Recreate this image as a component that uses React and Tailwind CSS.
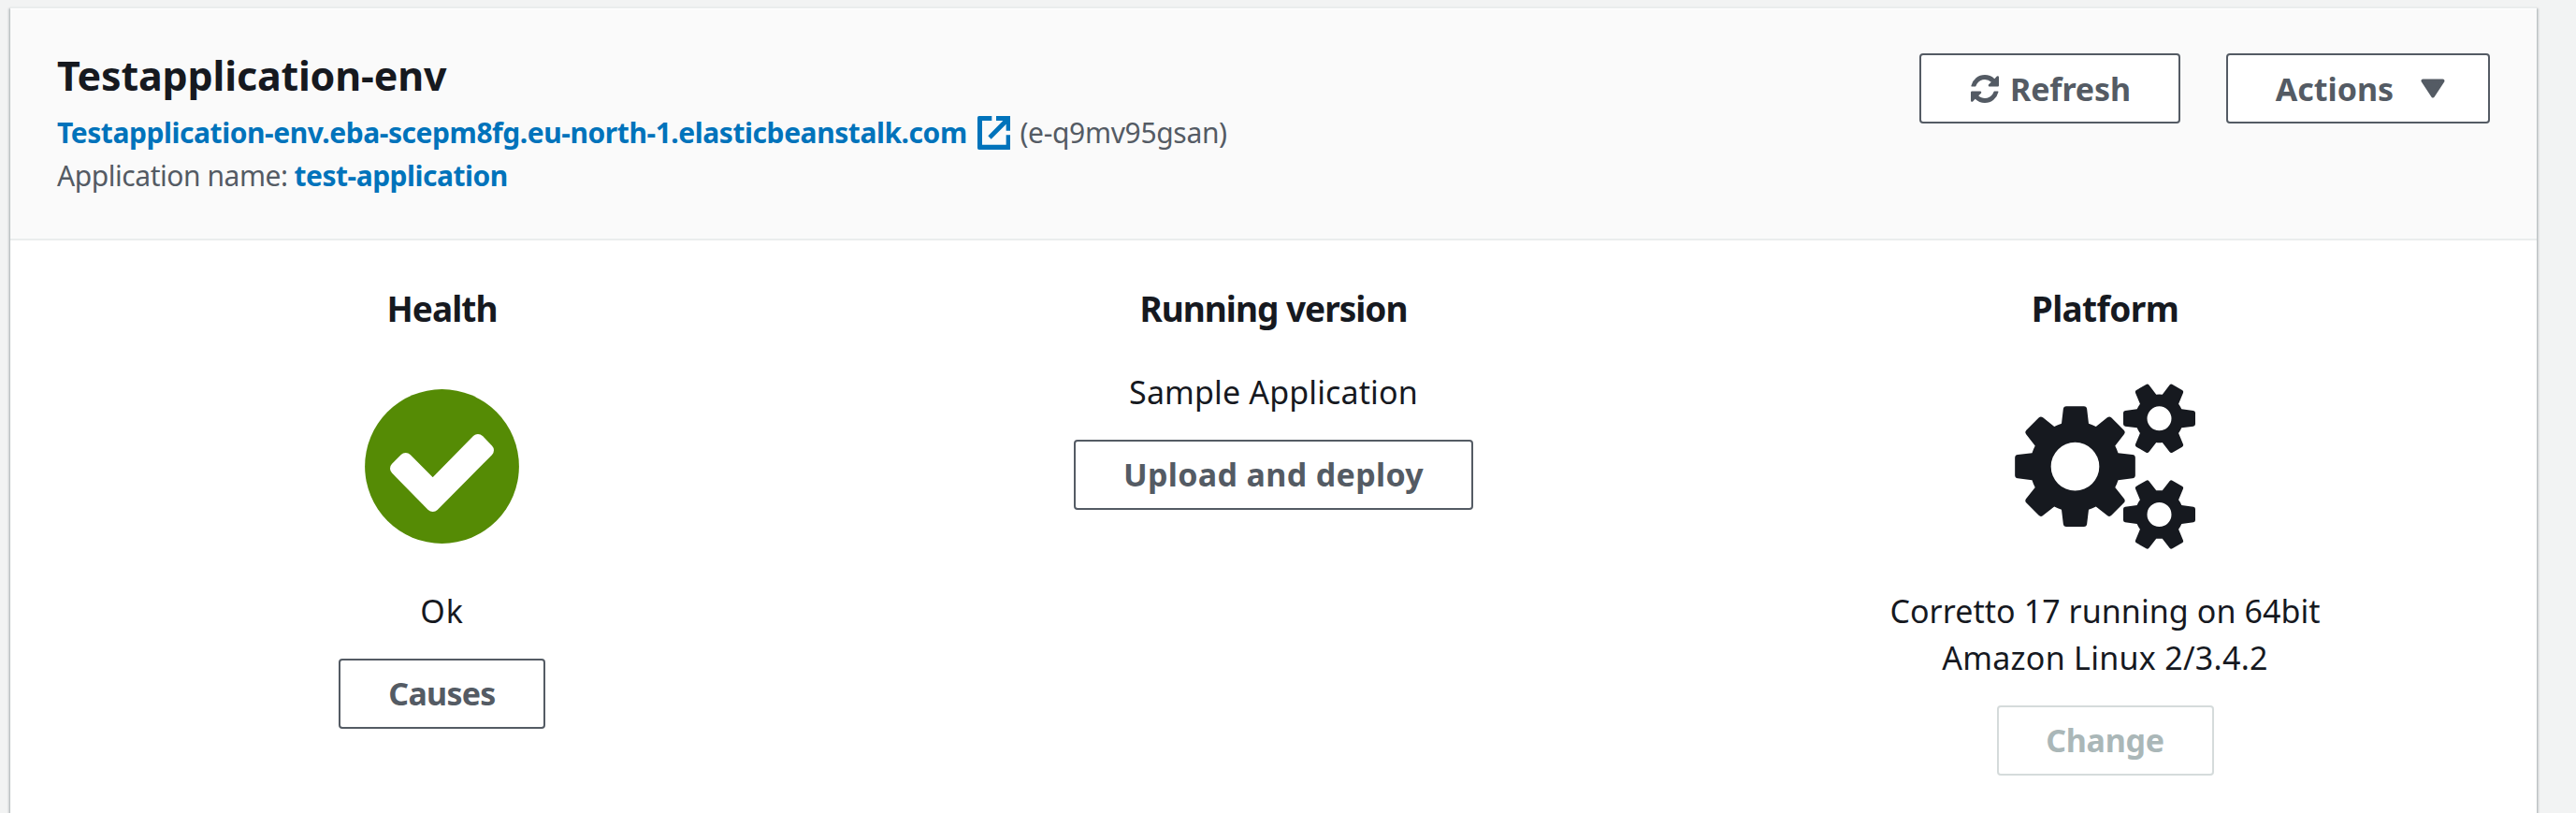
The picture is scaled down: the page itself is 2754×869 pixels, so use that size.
import React from "react";

const round = (n) => n.toFixed(2);

// Outline of a gear centred on (cx, cy). `tip` and `base` are [distance, half width] of a tooth.
function gearPath(cx, cy, teeth, tip, base, root, hole, corner) {
  const step = (Math.PI * 2) / teeth;
  const at = (angle, d, w) =>
    `${round(cx + d * Math.cos(angle) - w * Math.sin(angle))} ${round(cy + d * Math.sin(angle) + w * Math.cos(angle))}`;
  let path = "";
  for (let i = 0; i < teeth; i++) {
    const a = i * step;
    path += i === 0 ? `M${at(a, base[0], -base[1])}` : `A${root} ${root} 0 0 1 ${at(a, base[0], -base[1])}`;
    path += `L${at(a, tip[0] - corner, -tip[1] - 1)}Q${at(a, tip[0], -tip[1])} ${at(a, tip[0], -tip[1] + corner)}`;
    path += `L${at(a, tip[0], tip[1] - corner)}Q${at(a, tip[0], tip[1])} ${at(a, tip[0] - corner, tip[1] + 1)}`;
    path += `L${at(a, base[0], base[1])}`;
  }
  path += `A${root} ${root} 0 0 1 ${at(0, base[0], -base[1])}Z`;
  path += `M${cx - hole} ${cy}a${hole} ${hole} 0 1 0 ${hole * 2} 0a${hole} ${hole} 0 1 0 ${-hole * 2} 0Z`;
  return path;
}

const bigGear = gearPath(655.5, 626, 8, [193, 37], [138, 43.5], 145, 77.5, 9);
const topGear = gearPath(925.5, 472, 6, [115.5, 24], [71.5, 30], 77, 39, 6);
const bottomGear = gearPath(925.5, 780, 6, [115.5, 24], [71.5, 30], 77, 39, 6);

function GearsIcon() {
  return (
    <svg viewBox="462 360 579 532" className="h-[177.33px] w-[193px] text-[#16191f]" fill="currentColor" fillRule="evenodd">
      <path d={bigGear} />
      <path d={topGear} />
      <path d={bottomGear} />
    </svg>
  );
}

function HealthyIcon() {
  return (
    <svg viewBox="0 0 165 165" className="h-[165px] w-[165px]">
      <circle cx="82.5" cy="82.5" r="82.4" fill="#558b05" />
      <path
        d="M34 84.7 43.7 75 72.7 104.1 121 55 131 65.3 72.7 124Z"
        fill="#fff"
        stroke="#fff"
        strokeWidth="14"
        strokeLinejoin="round"
      />
    </svg>
  );
}

function RefreshIcon() {
  return (
    <svg viewBox="0 0 1536 1536" className="h-[30px] w-[30px]" fill="currentColor">
      <path d="M1511 928q0 5-1 7-64 268-268 434.5t-478 166.5q-146 0-282.5-55t-243.5-157l-129 129q-19 19-45 19t-45-19-19-45v-448q0-26 19-45t45-19h448q26 0 45 19t19 45-19 45l-137 137q71 66 161 102t187 36q134 0 250-65t186-179q11-17 53-117 8-23 30-23h192q13 0 22.500 9.500t9.500 22.500zm25-800v448q0 26-19 45t-45 19h-448q-26 0-45-19t-19-45 19-45l138-138q-148-137-349-137-134 0-250 65t-186 179q-11 17-53 117-8 23-30 23h-199q-13 0-22.500-9.500t-9.500-22.500v-7q65-268 270-434.500t480-166.500q146 0 284 55.500t245 156.500l130-129q19-19 45-19t45 19 19 45z" />
    </svg>
  );
}

function ExternalIcon() {
  return (
    <svg viewBox="0 0 107 108" className="h-[36px] w-[35.67px]" fill="currentColor">
      <path d="M46 0H5Q0 0 0 5V103Q0 108 5 108H101Q107 108 107 103V61H92V92H15V15H46Z" />
      <path d="M60 0H107V47H92V26L44 74 34 64 82 15H60Z" />
    </svg>
  );
}

function CaretIcon() {
  return (
    <svg viewBox="0 0 26 21" className="h-[21px] w-[26px]" fill="currentColor" stroke="currentColor" strokeWidth="4" strokeLinejoin="round">
      <path d="M2.500 2.500H23.500L13 18.500Z" />
    </svg>
  );
}

function Button({ className, children }) {
  return (
    <button
      type="button"
      className={
        "flex h-[75px] items-center justify-center rounded-[4px] border-2 bg-white text-[34px] leading-[50px] font-bold " +
        className
      }
    >
      {children}
    </button>
  );
}

function Column({ title, spacing, children }) {
  return (
    <section className="flex flex-col items-center text-[34px] leading-[50px]">
      <h2 className={"text-[37px] font-bold " + spacing}>{title}</h2>
      {children}
    </section>
  );
}

export default function App() {
  return (
    <main className="h-[869px] overflow-hidden bg-[#f2f3f3] pt-[7px] pr-[42px] pl-[11px] font-['Noto_Sans',sans-serif] text-[#16191f]">
      <div className="h-[900px] border-t-2 border-[#eaeded] bg-white pt-px shadow-[0_2px_2px_0_rgba(0,28,36,0.3),2px_2px_2px_0_rgba(0,28,36,0.15),-2px_2px_2px_0_rgba(0,28,36,0.15)]">
        <header className="flex h-[247px] items-start justify-between border-b-2 border-[#eaeded] bg-[#fafafa] pr-[50px] pl-[50px]">
          <div className="pt-[46px] text-[30px] leading-[46px] text-[#545b64]">
            <h1 className="text-[43px] leading-[50px] font-bold tracking-[-0.18px] text-[#16191f]">Testapplication-env</h1>
            <div className="mt-[13px] flex items-center">
              <a className="font-bold tracking-[-0.44px] text-[#0073bb]">
                Testapplication-env.eba-scepm8fg.eu-north-1.elasticbeanstalk.com
              </a>
              <span className="ml-[11px] text-[#0073bb]">
                <ExternalIcon />
              </span>
              <span className="ml-[10px] tracking-[-0.33px]">(e-q9mv95gsan)</span>
            </div>
            <div className="flex">
              <span className="tracking-[-0.45px]">Application name:</span>
              <a className="ml-[7px] font-bold tracking-[-0.5px] text-[#0073bb]">test-application</a>
            </div>
          </div>
          <div className="flex gap-[49px] pt-[47px]">
            <Button className="w-[279px] gap-[12px] border-[#545b64] pl-[2px] tracking-[-0.1px] text-[#545b64]">
              <RefreshIcon />
              <span>Refresh</span>
            </Button>
            <Button className="w-[282px] gap-[29px] border-[#545b64] pl-[5px] text-[#545b64]">
              <span>Actions</span>
              <CaretIcon />
            </Button>
          </div>
        </header>
        <div className="grid grid-cols-3 px-[17px] pt-[48px]">
          <Column title="Health" spacing="tracking-[-0.92px]">
            <div className="mt-[61px]">
              <HealthyIcon />
            </div>
            <p className="mt-[47px] tracking-[1px]">Ok</p>
            <Button className="mt-[26px] w-[221px] border-[#545b64] pb-[2px] tracking-[-0.74px] text-[#545b64]">Causes</Button>
          </Column>
          <Column title="Running version" spacing="tracking-[-1px]">
            <p className="mt-[39px] tracking-[0.135px]">Sample Application</p>
            <Button className="mt-[26px] w-[427px] border-[#545b64] pb-[2px] tracking-[0.34px] text-[#545b64]">Upload and deploy</Button>
          </Column>
          <Column title="Platform" spacing="tracking-[-0.6px]">
            <div className="mt-[55px]">
              <GearsIcon />
            </div>
            <p className="mt-[40.67px] text-center">
              <span className="block tracking-[0.07px]">Corretto 17 running on 64bit</span>
              <span className="block tracking-[0.28px]">Amazon Linux 2/3.4.2</span>
            </p>
            <Button className="mt-[26px] w-[232px] border-[#d5dbdb] tracking-[-0.26px] text-[#aab7b8]">Change</Button>
          </Column>
        </div>
      </div>
    </main>
  );
}
